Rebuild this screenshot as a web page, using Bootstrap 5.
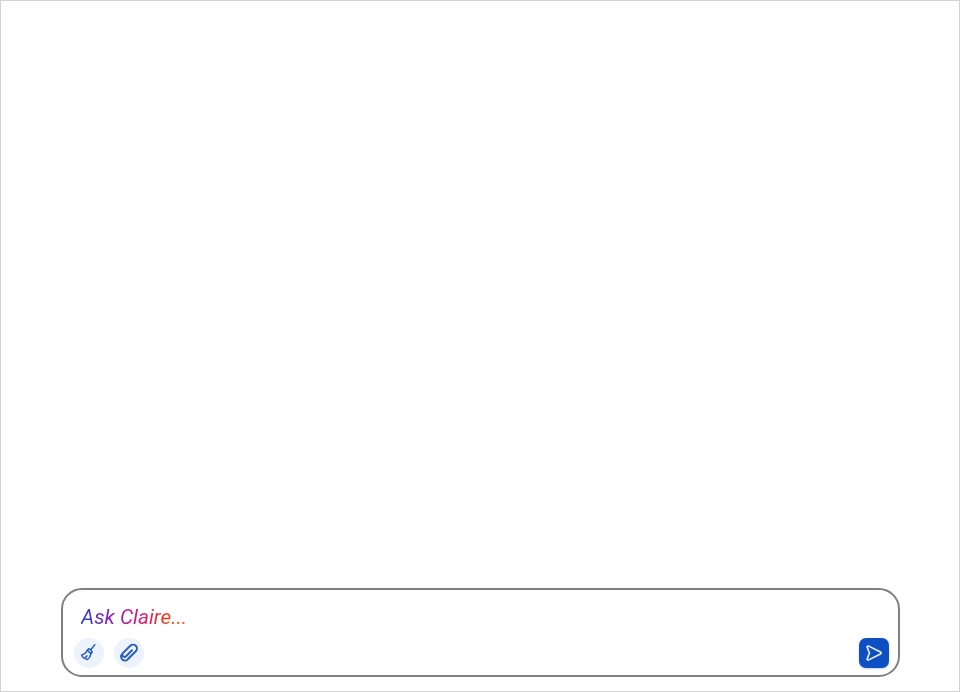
<!DOCTYPE html>
<html lang="en">
<head>
<meta charset="utf-8">
<title>Ask Claire</title>
<link href="https://cdn.jsdelivr.net/npm/bootstrap@5.3.0/dist/css/bootstrap.min.css" rel="stylesheet">
<style>
html, body { height: 100%; }
body { background: #fff; font-family: Roboto, "Liberation Sans", sans-serif; }
.app-frame { height: 692px; border: 1px solid #d2d2d2; padding: 0 59px 14px 60px; }
.chat-box { height: 89px; border: 2px solid #808080; border-radius: 21px; padding: 14px 9px 7px 11px; background: #fff; }
.ask-input { margin-left: 7px; font-size: 20.800px; line-height: 26px; font-style: italic; }
.ask-gradient { display: inline-block; background: linear-gradient(90deg, #2a44d0 0%, #9020b8 28%, #d81a7c 55%, #ee3a18 80%, #f56a2a 100%); -webkit-background-clip: text; background-clip: text; color: transparent; }
.tool-row { gap: 10px; }
.tool-btn { width: 30px; height: 30px; padding: 0; border: 0; background: #edf3fd; color: #2a5fc8; }
.tool-btn:hover { background: #edf3fd; color: #2a5fc8; }
.send-btn { width: 30px; height: 30px; padding: 0; border: 0; border-radius: 7px; background: #0f4fc4; color: #eef3fd; box-shadow: 0 1px 2px rgba(15, 79, 196, .25); }
.send-btn:hover { background: #0f4fc4; color: #eef3fd; }
</style>
</head>
<body>
<div class="app-frame d-flex flex-column justify-content-end">
  <div class="chat-box d-flex flex-column justify-content-between">
    <div class="ask-input"><span class="ask-gradient">Ask Claire...</span></div>
    <div class="d-flex justify-content-between align-items-center">
      <div class="d-flex tool-row">
        <button type="button" class="btn tool-btn rounded-circle d-flex align-items-center justify-content-center" aria-label="Clear">
          <svg width="20" height="20" viewBox="0 0 20 20" fill="none" stroke="currentColor" stroke-width="1.500" stroke-linejoin="round" stroke-linecap="round"><path d="M15.800 1.800 11.500 7"/><path d="M9.600 5.800c1.600.3 3.300 2 3.500 3.600l-1.300 1.200-3.500-3.400z"/><path d="M8.300 7.200C7.300 9.500 5.300 11.200 2.600 12.200c.9 2 3.500 3.800 6 4.300 2-1.500 3-3.500 3.200-5.900"/><path d="M6.200 14.600 8 12.900"/></svg>
        </button>
        <button type="button" class="btn tool-btn rounded-circle d-flex align-items-center justify-content-center" aria-label="Attach">
          <svg width="24" height="24" viewBox="0 0 24 24" fill="none" stroke="currentColor" stroke-width="2" stroke-linecap="round" stroke-linejoin="round"><g transform="rotate(45 12 12)"><path d="M12.200 8v8.300a2.200 2.200 0 0 1-4.400 0V6a3.900 3.900 0 0 1 7.800 0v11a3.900 3.900 0 0 1-7.800.8"/></g></svg>
        </button>
      </div>
      <button type="button" class="btn send-btn d-flex align-items-center justify-content-center" aria-label="Send">
        <svg width="18" height="18" viewBox="0 0 18 18" fill="none" stroke="currentColor" stroke-width="1.600" stroke-linejoin="round" stroke-linecap="round"><path d="M2.200 3.400c-.3-1 .6-1.700 1.500-1.300l11.800 5.900c.9.500.9 1.500 0 2L3.700 15.900c-.9.400-1.800-.3-1.500-1.300L4.500 9z"/></svg>
      </button>
    </div>
  </div>
</div>
<script src="https://cdn.jsdelivr.net/npm/bootstrap@5.3.0/dist/js/bootstrap.bundle.min.js"></script>
</body>
</html>
